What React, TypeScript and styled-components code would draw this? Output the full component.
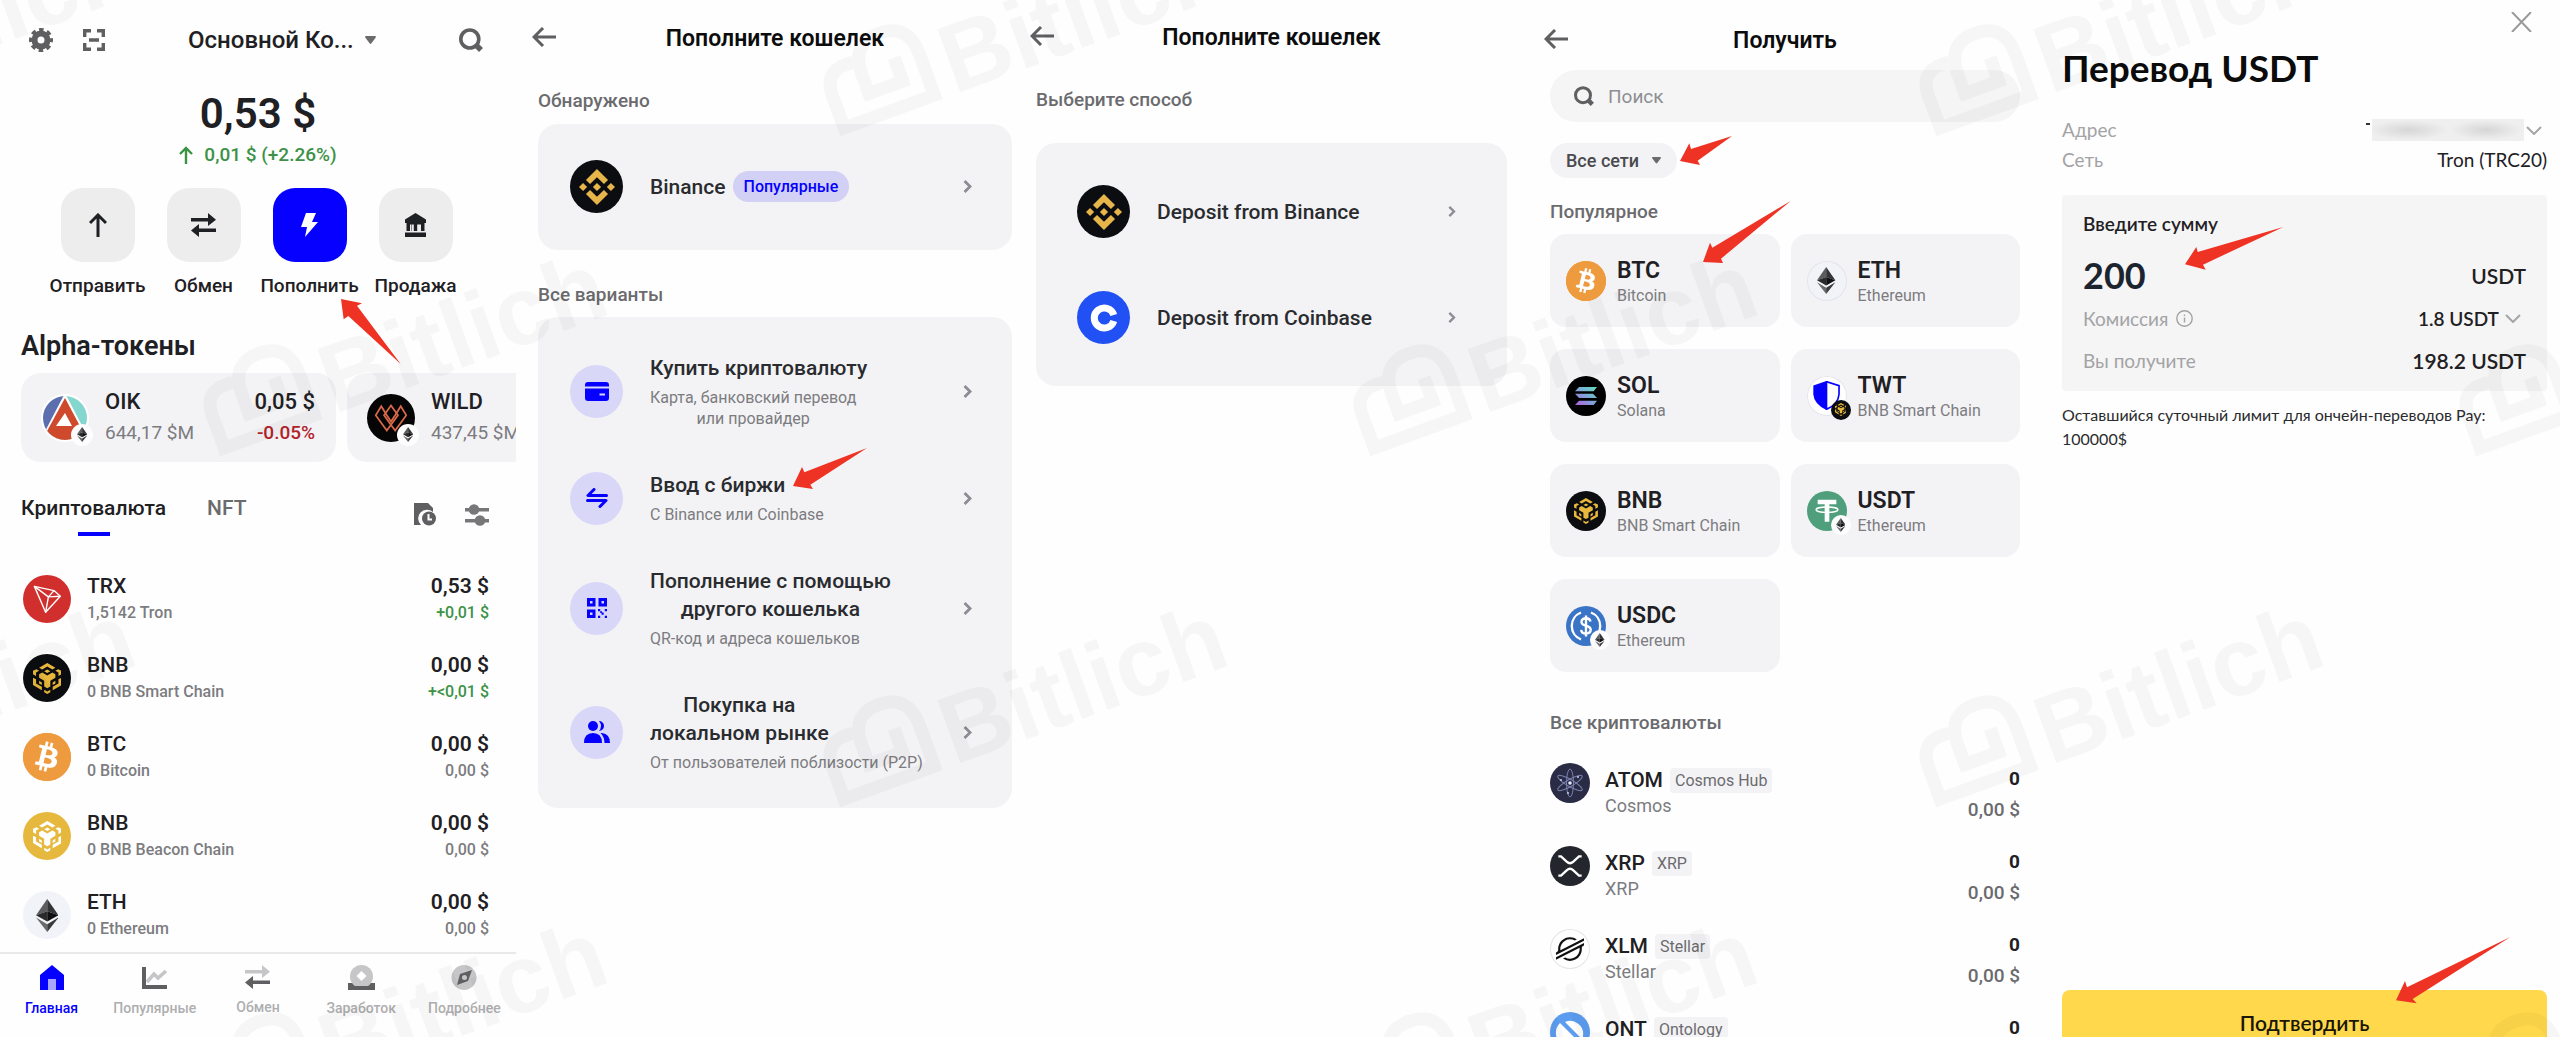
import React from 'react';
import styled, { createGlobalStyle, css } from 'styled-components';
import { SiBinance, SiBitcoin, SiStellar } from 'react-icons/si';

const c = {
  ink: '#1f2023',
  text: '#2a2b2e',
  muted: '#6b6b6e',
  soft: '#7c7c80',
  faint: '#a3a3a5',
  card: '#f3f3f6',
  blue: '#0500ff',
  green: '#3c9246',
  red: '#b3232c',
  arrow: '#ee3224',
};

const sans = `'Roboto', 'Liberation Sans', sans-serif`;
const pay = `'Lato', 'Roboto', sans-serif`;

const GlobalStyle = createGlobalStyle`
  *, *::before, *::after { box-sizing: border-box; }
  body { margin: 0; background: #fefefe; font-family: ${sans}; color: ${c.ink}; }
  h1, h2, h3, p, ul, dl, dd, dt { margin: 0; padding: 0; font-weight: inherit; }
  li { list-style: none; }
  svg { display: block; flex: none; }
  button, input, select {
    font: inherit; color: inherit; background: none; border: 0; margin: 0; padding: 0;
    appearance: none; outline: 0;
  }
  button, select { cursor: pointer; }
`;

const Page = styled.div`
  position: relative;
  display: grid;
  grid-template-columns: 516fr 509fr 501fr 514fr 520fr;
  height: 100vh;
  overflow: hidden;
`;

const Panel = styled.section<{ $pad?: string; $font?: string }>`
  display: flex;
  flex-direction: column;
  min-width: 0;
  min-height: 0;
  overflow: hidden;
  padding: ${p => p.$pad ?? '0'};
  font-family: ${p => p.$font ?? sans};
`;

/* ---------- watermark ---------- */

const Marks = styled.div`
  position: absolute;
  inset: 0;
  overflow: hidden;
  pointer-events: none;
  z-index: 2;
`;

const Mark = styled.div<{ $x: number; $y: number }>`
  position: absolute;
  left: ${p => p.$x}px;
  top: ${p => p.$y}px;
  display: flex;
  align-items: flex-end;
  gap: 12px;
  transform: rotate(-20deg);
  transform-origin: 0 100%;
  opacity: 0.026;
  color: #000;
  font: 700 97px/68px 'Liberation Sans', sans-serif;
`;

const MarkLogo = () => (
  <svg width="110" height="92" viewBox="0 0 110 92" fill="none" stroke="#000" strokeWidth="13">
    <path d="M38 26H30Q7 26 7 50V85H103V42Q103 8 72 8 42 8 42 40V61H78V36" />
  </svg>
);

const markSpots: [number, number][] = [
  [-252, 45], [840, 45], [1936, 45],
  [220, 365], [1370, 365], [2476, 365],
  [-252, 716], [840, 716], [1936, 716],
  [220, 1033], [1370, 1033], [2476, 1033],
];

/* ---------- annotation arrows ---------- */

const ArrowSvg = styled.svg<{ $x: string; $y: string }>`
  position: absolute;
  left: ${p => p.$x};
  top: ${p => p.$y};
  z-index: 3;
  pointer-events: none;
  overflow: visible;
`;

const Arrow = ({ x, y, w, h, points }: { x: string; y: string; w: number; h: number; points: string }) => (
  <ArrowSvg $x={x} $y={y} width={w} height={h} viewBox={`0 0 ${w * 3} ${h * 3}`} aria-hidden>
    <polygon points={points} fill={c.arrow} />
  </ArrowSvg>
);

/* ---------- coin logos ---------- */

const Coin = styled.span<{ $size: number; $bg: string; $ring?: boolean }>`
  position: relative;
  display: grid;
  place-items: center;
  flex: none;
  width: ${p => p.$size}px;
  height: ${p => p.$size}px;
  border-radius: 50%;
  background: ${p => p.$bg};
  ${p => p.$ring && css`box-shadow: inset 0 0 0 1px #e4e5ea;`}
`;

const CoinBadge = styled.span<{ $size: number; $bg: string }>`
  position: absolute;
  right: -4px;
  bottom: -4px;
  display: grid;
  place-items: center;
  width: ${p => p.$size}px;
  height: ${p => p.$size}px;
  border-radius: 50%;
  background: ${p => p.$bg};
`;

const EthGlyph = ({ h }: { h: number }) => (
  <svg width={h * 0.68} height={h} viewBox="0 0 64 94">
    <path d="M32 0 0 46 32 35Z" fill="#5c5c5e" />
    <path d="M32 0 64 46 32 35Z" fill="#343436" />
    <path d="M0 46 32 35V64Z" fill="#2a2a2c" />
    <path d="M64 46 32 35V64Z" fill="#101012" />
    <path d="M0 53 32 72V94Z" fill="#6a6a6c" />
    <path d="M64 53 32 72V94Z" fill="#3a3a3c" />
  </svg>
);

const CubeGlyph = ({ h, color }: { h: number; color: string }) => (
  <svg width={h * 0.92} height={h} viewBox="0 0 84 91" fill={color}>
    <path d="M42 0 66 14 57 19 42 10 27 19 18 14Z" />
    <path d="M42 19 51 24 42 29 33 24Z" />
    <path d="M10 18 18 23 9 28V38L0 33V23Z" />
    <path d="M74 18 66 23 75 28V38L84 33V23Z" />
    <path d="M18 33 27 28 42 37 57 28 66 33V43L51 52V69L42 74 33 69V52L18 43Z" />
    <path d="M0 43 9 48V60L26 70V80L0 65Z" />
    <path d="M84 43 75 48V60L58 70V80L84 65Z" />
    <path d="M18 52 26 57V65L18 60Z" />
    <path d="M66 52 58 57V65L66 60Z" />
    <path d="M33 79 42 84 51 79V86L42 91 33 86Z" />
  </svg>
);

const Btc = ({ size }: { size: number }) => (
  <Coin $size={size} $bg="radial-gradient(circle, #fff 62%, #f09a3e 64%)">
    <SiBitcoin size={size} color="#ee9b40" />
  </Coin>
);

const Bnb = ({ size, bg = '#0b0d10', color = '#e8b73c' }: { size: number; bg?: string; color?: string }) => (
  <Coin $size={size} $bg={bg}>
    <CubeGlyph h={Math.round(size * 0.64)} color={color} />
  </Coin>
);

const Eth = ({ size, ring }: { size: number; ring?: boolean }) => (
  <Coin $size={size} $bg="#f2f3f8" $ring={ring}>
    <EthGlyph h={Math.round(size * 0.68)} />
  </Coin>
);

const EthBadge = ({ size = 20 }: { size?: number }) => (
  <CoinBadge $size={size} $bg="#fdfdfe"><EthGlyph h={Math.round(size * 0.7)} /></CoinBadge>
);

const Trx = ({ size }: { size: number }) => (
  <Coin $size={size} $bg="#d12f2e">
    <svg width="28" height="28" viewBox="0 0 80 80" fill="none" stroke="#fff" strokeWidth="4" strokeLinejoin="round">
      <path d="M4 4 60 16 78 32 36 78Z" />
      <path d="M4 4 44 34 78 32M44 34 36 78M44 34 60 16" />
    </svg>
  </Coin>
);

const Binance = () => (
  <Coin $size={53} $bg="#0b0d10"><SiBinance size={36} color="#e8b54a" /></Coin>
);

const Coinbase = () => (
  <Coin $size={53} $bg="#2151f5">
    <svg width="28" height="28" viewBox="0 0 28 28" fill="none" stroke="#fff" strokeWidth="7">
      <path d="M23.800 11A10 10 0 1 0 23.800 17" />
    </svg>
  </Coin>
);

const Oik = () => (
  <Coin $size={48} $bg="#fff">
    <svg width="46" height="46" viewBox="0 0 46 46">
      <clipPath id="oik"><circle cx="23" cy="23" r="22" /></clipPath>
      <g clipPath="url(#oik)">
        <rect width="23" height="46" fill="#5b6fae" />
        <rect x="23" width="23" height="46" fill="#85d6cf" />
        <path d="M23 -2 48 46H-2Z" fill="#fff" />
        <path d="M23 3 46 46H0L4 38Z" fill="#cf4a2c" />
        <path d="M23 18 30 31H14Z" fill="#fff" />
      </g>
    </svg>
    <EthBadge size={22} />
  </Coin>
);

const Wild = () => (
  <Coin $size={48} $bg="#050505">
    <svg width="32" height="28" viewBox="0 0 92 80" fill="none" stroke="#d9684a" strokeWidth="5">
      <path d="M18 6 2 32 34 76 66 32 46 4 26 32 46 60 58 76 90 32 74 6 58 32 46 50 34 32Z" />
    </svg>
    <EthBadge size={22} />
  </Coin>
);

const Sol = () => (
  <Coin $size={40} $bg="#000">
    <svg width="22" height="18" viewBox="0 0 66 54">
      <defs>
        <linearGradient id="sol" x1="1" y1="0" x2="0" y2="1">
          <stop offset="0" stopColor="#5fe0b8" /><stop offset=".5" stopColor="#7fa6d8" /><stop offset="1" stopColor="#b45be0" />
        </linearGradient>
      </defs>
      <path fill="url(#sol)" d="M12 0H66L56 13H0ZM0 20H54L66 33H12ZM12 41H66L56 54H0Z" />
    </svg>
  </Coin>
);

const Twt = () => (
  <Coin $size={40} $bg="#fff" $ring>
    <svg width="27" height="29" viewBox="0 0 80 88">
      <path d="M40 2 78 14V40Q76 70 40 86Z" fill="#fff" stroke={c.blue} strokeWidth="5" />
      <path d="M40 0V88Q2 70 0 40V14Z" fill={c.blue} />
    </svg>
    <CoinBadge $size={20} $bg="#0b0d10"><CubeGlyph h={13} color="#e8b73c" /></CoinBadge>
  </Coin>
);

const Usdt = () => (
  <Coin $size={40} $bg="#4f9f7d">
    <svg width="24" height="24" viewBox="0 0 72 72" fill="#fff">
      <path d="M8 2H64V16H43V68H29V16H8Z" />
      <ellipse cx="36" cy="32" rx="33" ry="8" fill="none" stroke="#fff" strokeWidth="4" />
    </svg>
    <EthBadge />
  </Coin>
);

const Usdc = () => (
  <Coin $size={40} $bg="#3a74c7">
    <svg width="40" height="40" viewBox="0 0 40 40" fill="none" stroke="#fff" strokeWidth="2.400">
      <path d="M15 6.500A14.500 14.500 0 0 0 15 33.500M25 6.500A14.500 14.500 0 0 1 25 33.500" />
      <path d="M24.500 15.500C24 12.800 22 12.200 20 12.200 17.300 12.200 15.500 13.600 15.500 16 15.500 21 24.700 18.500 24.700 23.600 24.700 26.200 22.600 27.600 20 27.600 17.300 27.600 15.400 26.400 15.200 23.800M20 9.500V30.500" />
    </svg>
    <EthBadge />
  </Coin>
);

const Atom = () => (
  <Coin $size={40} $bg="#2a2b45">
    <svg width="30" height="30" viewBox="0 0 30 30" fill="none" stroke="#7b80ad" strokeWidth="1">
      <ellipse cx="15" cy="15" rx="3.500" ry="14" />
      <ellipse cx="15" cy="15" rx="3.500" ry="14" transform="rotate(60 15 15)" />
      <ellipse cx="15" cy="15" rx="3.500" ry="14" transform="rotate(-60 15 15)" />
      <circle cx="15" cy="15" r="1.800" fill="#e6e8ff" stroke="none" />
      <circle cx="6" cy="12" r="1" fill="#cdd0ee" stroke="none" />
      <circle cx="13" cy="25" r="1" fill="#cdd0ee" stroke="none" />
      <circle cx="23" cy="9" r="1" fill="#cdd0ee" stroke="none" />
    </svg>
  </Coin>
);

const Xrp = () => (
  <Coin $size={40} $bg="#24262d">
    <svg width="24" height="22" viewBox="0 0 72 66" fill="none" stroke="#fff" strokeWidth="7">
      <path d="M1 4H9L26 20Q36 29 46 20L63 4H71" />
      <path d="M1 62H9L26 46Q36 37 46 46L63 62H71" />
    </svg>
  </Coin>
);

const Ont = () => (
  <Coin $size={40} $bg="#5c9df0">
    <svg width="40" height="40" viewBox="0 0 40 40">
      <path d="M10 11 30 31A14 14 0 0 1 10 11Z" fill="#fff" />
      <path d="M15 10A13 13 0 0 1 33 24V28Z" fill="#fff" />
    </svg>
  </Coin>
);

/* ---------- small icons ---------- */

const Caret = ({ w = 11 }: { w?: number }) => (
  <svg width={w} height={w * 0.75} viewBox="0 0 12 9" fill={c.muted}><path d="M1 0H11Q12.500 0 11.500 2L7 8Q6 9.200 5 8L.5 2Q-.5 0 1 0Z" /></svg>
);

const BackIcon = () => (
  <svg width="24" height="20" viewBox="0 0 24 20" fill="none" stroke="#5f5f62" strokeWidth="3"><path d="M11 1 2 10 11 19M2 10H24" /></svg>
);

const ChevronRight = ({ h = 13 }: { h?: number }) => (
  <svg width={h * 0.7} height={h} viewBox="0 0 9 13" fill="none" stroke="#8b8c94" strokeWidth="2.800"><path d="M1.500 1 7 6.500 1.500 12" /></svg>
);

const ChevronDown = () => (
  <svg width="16" height="9" viewBox="0 0 16 9" fill="none" stroke="#a6a6a8" strokeWidth="2"><path d="M1 1 8 8 15 1" /></svg>
);

const SearchIcon = ({ size }: { size: number }) => (
  <svg width={size} height={size} viewBox="0 0 24 24" fill="none" stroke="#5f5f62"><circle cx="10.800" cy="11" r="9" strokeWidth="3.600" /><path d="M17 17 22 22" strokeWidth="5.500" /></svg>
);

const GearIcon = () => (
  <svg width="24" height="24" viewBox="0 0 24 24" fill="none">
    <circle cx="12" cy="12" r="6.500" stroke="#5f5f62" strokeWidth="6" />
    <circle cx="12" cy="12" r="10.300" stroke="#5f5f62" strokeWidth="3.400" strokeDasharray="4.500 3.590" strokeDashoffset="2.250" />
  </svg>
);

const ScanIcon = () => (
  <svg width="22" height="22" viewBox="0 0 22 22" fill="none" stroke="#5f5f62" strokeWidth="3.400"><path d="M1.700 8V1.700H8M14 1.700H20.300V8M20.300 14V20.300H14M8 20.300H1.700V14M6 11H16" /></svg>
);

const SwapIcon = ({ top = c.ink, bottom = c.ink }: { top?: string; bottom?: string }) => (
  <svg width="27" height="24" viewBox="0 0 27 24">
    <path d="M1 5H18V0L26 6.800 18 13V8.500H1Z" fill={top} />
    <path d="M26 15.500H9V11L1 17.500 9 24V19H26Z" fill={bottom} />
  </svg>
);

/* ---------- shared header pieces ---------- */

const TitleBar = styled.header<{ $h: number; $shift: string }>`
  display: grid;
  grid-template-columns: 24px 1fr 24px;
  align-items: center;
  flex: none;
  height: ${p => p.$h}px;
  margin: ${p => p.$shift};
`;

const ScreenTitle = styled.h2`
  padding-top: 3px;
  font-size: 23px;
  line-height: 28px;
  font-weight: 600;
  text-align: center;
  color: #0c0c0d;
`;

const SectionLabel = styled.h3<{ $m?: string }>`
  flex: none;
  font-size: 19px;
  line-height: 24px;
  font-weight: 500;
  color: ${c.muted};
  margin: ${p => p.$m ?? '0'};
`;

const Header = ({ title, h, shift }: { title: string; h: number; shift: string }) => (
  <TitleBar $h={h} $shift={shift}>
    <button aria-label="Назад"><BackIcon /></button>
    <ScreenTitle>{title}</ScreenTitle>
  </TitleBar>
);

/* ---------- panel 1: wallet ---------- */

const WalletBar = styled.header`
  display: flex;
  align-items: center;
  justify-content: space-between;
  height: 80px;
  padding: 0 33px 0 29px;
  flex: none;
`;

const BarGroup = styled.div<{ $gap: number }>`
  display: flex;
  align-items: center;
  gap: ${p => p.$gap}px;
`;

const WalletSelect = styled.select`
  font-size: 24px;
  line-height: 30px;
  font-weight: 500;
`;

const Balance = styled.p`
  text-align: center;
  font-size: 42px;
  line-height: 52px;
  font-weight: 600;
  margin-top: 8px;
`;

const Change = styled.p`
  display: flex;
  justify-content: center;
  align-items: center;
  gap: 11px;
  margin-top: 3px;
  font-size: 19px;
  line-height: 24px;
  font-weight: 500;
  color: ${c.green};
`;

const Actions = styled.nav`
  display: grid;
  grid-template-columns: repeat(4, 106px);
  justify-content: center;
  margin-top: 21px;
  padding-right: 3px;
`;

const ActionButton = styled.button`
  position: relative;
  display: flex;
  flex-direction: column;
  align-items: center;
  gap: 12px;
  font-size: 19px;
  line-height: 24px;
  font-weight: 500;
`;

const ActionTile = styled.span<{ $active?: boolean }>`
  display: grid;
  place-items: center;
  width: 74px;
  height: 74px;
  border-radius: 22px;
  background: ${p => (p.$active ? c.blue : '#ededee')};
`;

const AlphaTitle = styled.h2`
  margin: 32px 21px 11px;
  font-size: 27px;
  line-height: 32px;
  font-weight: 600;
`;

const AlphaStrip = styled.div`
  display: flex;
  gap: 11px;
  padding-left: 21px;
  overflow: hidden;
`;

const AlphaCard = styled.article`
  display: flex;
  align-items: center;
  flex: none;
  gap: 16px;
  width: 315px;
  height: 89px;
  padding: 0 21px 0 20px;
  border-radius: 20px;
  background: ${c.card};
`;

const AlphaText = styled.div<{ $end?: boolean; $tone?: string }>`
  display: flex;
  flex-direction: column;
  gap: 5px;
  font-size: 22px;
  line-height: 26px;
  font-weight: 500;
  white-space: nowrap;
  ${p => p.$end && css`margin-left: auto; text-align: right;`}
  small { font-size: 19px; font-weight: ${p => (p.$end ? 500 : 400)}; color: ${p => p.$tone ?? c.soft}; }
`;

const Tabs = styled.div`
  display: flex;
  align-items: flex-start;
  gap: 41px;
  margin-top: 33px;
  padding: 0 27px 0 21px;
`;

const Tab = styled.button<{ $active?: boolean }>`
  display: flex;
  flex-direction: column;
  align-items: center;
  gap: 11px;
  font-size: 21px;
  line-height: 26px;
  font-weight: 500;
  color: ${p => (p.$active ? c.ink : c.muted)};
  &::after {
    content: '';
    width: 32px;
    height: 4px;
    background: ${p => (p.$active ? c.blue : 'transparent')};
  }
`;

const TabTools = styled.div`
  display: flex;
  gap: 29px;
  margin: 8px 0 0 auto;
`;

const HoldingList = styled.ul`
  display: flex;
  flex-direction: column;
  gap: 31px;
  margin-top: 39px;
  padding: 0 27px 0 23px;
`;

const Holding = styled.li`
  display: flex;
  align-items: center;
  gap: 16px;
  height: 48px;
`;

const HoldingText = styled.div<{ $end?: boolean; $up?: boolean }>`
  display: flex;
  flex-direction: column;
  font-size: 21px;
  line-height: 28px;
  font-weight: 500;
  ${p => p.$end && css`margin-left: auto; text-align: right; font-weight: 600;`}
  small {
    font-size: 16px;
    line-height: 26px;
    font-weight: 500;
    color: ${p => (p.$up ? c.green : c.soft)};
  }
`;

const TabBar = styled.nav`
  display: grid;
  grid-template-columns: repeat(5, 1fr);
  flex: none;
  height: 85px;
  margin-top: auto;
  padding-top: 11px;
  border-top: 2px solid #e9e9ea;
  background: #fefefe;
`;

const TabBarItem = styled.button<{ $active?: boolean }>`
  display: flex;
  flex-direction: column;
  align-items: center;
  gap: 8px;
  height: 53px;
  font-size: 14px;
  line-height: 20px;
  font-weight: 500;
  color: ${p => (p.$active ? c.blue : '#aeaeb0')};
`;

const holdings = [
  { icon: <Trx size={48} />, name: 'TRX', sub: '1,5142 Tron', usd: '0,53 $', delta: '+0,01 $', up: true },
  { icon: <Bnb size={48} />, name: 'BNB', sub: '0 BNB Smart Chain', usd: '0,00 $', delta: '+<0,01 $', up: true },
  { icon: <Btc size={48} />, name: 'BTC', sub: '0 Bitcoin', usd: '0,00 $', delta: '0,00 $' },
  { icon: <Bnb size={48} bg="#e6b93e" color="#fff" />, name: 'BNB', sub: '0 BNB Beacon Chain', usd: '0,00 $', delta: '0,00 $' },
  { icon: <Eth size={48} />, name: 'ETH', sub: '0 Ethereum', usd: '0,00 $', delta: '0,00 $' },
];

const WalletPanel = () => (
  <Panel>
    <WalletBar>
      <BarGroup $gap={30}>
        <button aria-label="Настройки"><GearIcon /></button>
        <button aria-label="Сканировать"><ScanIcon /></button>
      </BarGroup>
      <BarGroup $gap={11}>
        <WalletSelect aria-label="Кошелек"><option>Основной Ко...</option></WalletSelect>
        <Caret />
      </BarGroup>
      <button aria-label="Поиск"><SearchIcon size={24} /></button>
    </WalletBar>
    <Balance>0,53 $</Balance>
    <Change>
      <svg width="14" height="18" viewBox="0 0 14 18" fill="none" stroke={c.green} strokeWidth="2.400"><path d="M1 8 7 2 13 8M7 2V18" /></svg>
      0,01 $ (+2.26%)
    </Change>
    <Actions>
      <ActionButton>
        <ActionTile><svg width="18" height="24" viewBox="0 0 18 24" fill="none" stroke={c.ink} strokeWidth="3"><path d="M1 10 9 2 17 10M9 2V24" /></svg></ActionTile>
        Отправить
      </ActionButton>
      <ActionButton>
        <ActionTile><SwapIcon /></ActionTile>
        Обмен
      </ActionButton>
      <ActionButton>
        <ActionTile $active><svg width="17" height="24" viewBox="0 0 17 24" fill="#fff"><path d="M5 0H15L11 9H17L4 24 6 14H0Z" /></svg></ActionTile>
        Пополнить
        <Arrow x="84px" y="111px" w={60} h={65} points="0,0 63,13 48,20 179,195 22,51 8,61" />
      </ActionButton>
      <ActionButton>
        <ActionTile><svg width="23" height="24" viewBox="0 0 23 24" fill={c.ink}><path d="M11.500 0 22 6.500V10H1V6.500ZM2.500 11.500H6V18H2.500ZM7.500 10H8V18H7.500ZM9.800 11.500H13.200V18H9.800ZM17 11.500H20.500V18H17ZM1 19.500H22V24H1ZM2.500 10H20.500V11.500H2.500Z" /></svg></ActionTile>
        Продажа
      </ActionButton>
    </Actions>
    <AlphaTitle>Alpha-токены</AlphaTitle>
    <AlphaStrip>
      <AlphaCard>
        <Oik />
        <AlphaText>OIK<small>644,17 $M</small></AlphaText>
        <AlphaText $end $tone={c.red}>0,05 $<small>-0.05%</small></AlphaText>
      </AlphaCard>
      <AlphaCard>
        <Wild />
        <AlphaText>WILD<small>437,45 $M</small></AlphaText>
      </AlphaCard>
    </AlphaStrip>
    <Tabs>
      <Tab $active>Криптовалюта</Tab>
      <Tab>NFT</Tab>
      <TabTools>
        <button aria-label="История">
          <svg width="22" height="23" viewBox="0 0 22 23">
            <path d="M0 0H14L19 5V9A8 8 0 0 0 7 22H0Z" fill="#5f5f62" />
            <circle cx="15" cy="15.500" r="7" fill="#5f5f62" />
            <path d="M14.500 11V16.500H18" fill="none" stroke="#fff" strokeWidth="2" />
          </svg>
        </button>
        <button aria-label="Фильтр">
          <svg width="24" height="22" viewBox="0 0 24 22" fill="#77777a"><rect y="4" width="24" height="3.500" /><circle cx="9" cy="5.500" r="5.300" /><rect y="15" width="24" height="3.500" /><circle cx="15" cy="16.500" r="5.300" /></svg>
        </button>
      </TabTools>
    </Tabs>
    <HoldingList>
      {holdings.map((r, i) => (
        <Holding key={i}>
          {r.icon}
          <HoldingText>{r.name}<small>{r.sub}</small></HoldingText>
          <HoldingText $end $up={r.up}>{r.usd}<small>{r.delta}</small></HoldingText>
        </Holding>
      ))}
    </HoldingList>
    <TabBar>
      <TabBarItem $active>
        <svg width="26" height="25" viewBox="0 0 26 25"><path d="M13 0 25 10V25H1V10Z" fill={c.blue} /><rect x="9" y="14" width="8" height="11" fill="#a6a4ff" /></svg>
        Главная
      </TabBarItem>
      <TabBarItem>
        <svg width="26" height="25" viewBox="0 0 26 25" fill="none"><path d="M2 2V22H25" stroke="#5f5f62" strokeWidth="4" /><path d="M5 17 12 9 16 13 24 6" stroke="#c6c6c8" strokeWidth="3.500" /></svg>
        Популярные
      </TabBarItem>
      <TabBarItem>
        <SwapIcon top="#c6c6c8" bottom="#5f5f62" />
        Обмен
      </TabBarItem>
      <TabBarItem>
        <svg width="27" height="25" viewBox="0 0 27 25"><path d="M0 18H27V25H0Z" fill="#5f5f62" /><circle cx="13.500" cy="11.500" r="11.500" fill="#c6c6c8" /><path d="M0 21H27V25H0Z" fill="#5f5f62" /><path d="M13.500 6 18.500 11 13.500 16 8.500 11Z" fill="#fff" /></svg>
        Заработок
      </TabBarItem>
      <TabBarItem>
        <svg width="26" height="25" viewBox="0 0 26 25"><circle cx="13" cy="12.500" r="12.500" fill="#c6c6c8" /><path d="M21 5 17 16 6 20 9 9Z" fill="#5f5f62" /><circle cx="13.500" cy="12.500" r="2.500" fill="#c6c6c8" /></svg>
        Подробнее
      </TabBarItem>
    </TabBar>
  </Panel>
);

/* ---------- panels 2 and 3: top-up options ---------- */

const OptionCard = styled.ul<{ $pad: string; $gap: number }>`
  display: flex;
  flex-direction: column;
  flex: none;
  gap: ${p => p.$gap}px;
  padding: ${p => p.$pad};
  border-radius: 20px;
  background: ${c.card};
`;

const OptionButton = styled.button`
  display: flex;
  align-items: center;
  gap: 27px;
  width: 100%;
  min-height: 53px;
  > svg { margin-left: auto; }
`;

const OptionText = styled.span`
  display: flex;
  flex-direction: column;
  align-items: flex-start;
  gap: 5px;
  text-align: center;
`;

const OptionTitle = styled.span`
  position: relative;
  font-size: 21px;
  line-height: 28px;
  font-weight: 500;
  color: ${c.text};
`;

const OptionSub = styled.span`
  font-size: 16px;
  line-height: 21px;
  white-space: nowrap;
  color: ${c.soft};
`;

const Inline = styled.span`
  display: flex;
  align-items: center;
  gap: 7px;
`;

const Popular = styled.span`
  padding: 0 11px;
  border-radius: 16px;
  background: #d2d0f5;
  color: ${c.blue};
  font-size: 16px;
  line-height: 31px;
  font-weight: 500;
`;

const IconCoin = styled(Coin)`
  background: #d9d7f7;
`;

const options: { icon: React.ReactNode; title: React.ReactNode; sub: React.ReactNode }[] = [
  {
    icon: <svg width="24" height="19" viewBox="0 0 24 19"><path d="M3 0H21Q24 0 24 3V4.500H0V3Q0 0 3 0ZM0 6.500H24V16Q24 19 21 19H3Q0 19 0 16ZM14.500 11.500V13.500H20V11.500Z" fill={c.blue} fillRule="evenodd" /></svg>,
    title: 'Купить криптовалюту',
    sub: <>Карта, банковский перевод<br />или провайдер</>,
  },
  {
    icon: <svg width="22" height="20" viewBox="0 0 22 20" fill="none" stroke={c.blue} strokeWidth="3" strokeLinecap="round" strokeLinejoin="round"><path d="M8 1.500 2 7.500H20.500M14 18.500 20 12.500H1.500" /></svg>,
    title: <>Ввод с биржи<Arrow x="calc(100% + 8px)" y="-23px" w={74} h={41} points="0,114 60,123 52,110 222,0 34,73 27,57" /></>,
    sub: 'С Binance или Coinbase',
  },
  {
    icon: (
      <svg width="20" height="20" viewBox="0 0 20 20">
        <path d="M1.500 1.500H7V7H1.500ZM13 1.500H18.500V7H13ZM1.500 13H7V18.500H1.500Z" fill="none" stroke={c.blue} strokeWidth="3" />
        <path d="M11 11H13.200V13.200H11ZM14.500 14.500H16.700V16.700H14.500ZM17.800 11H20V13.200H17.800ZM11 17.800H13.200V20H11ZM17.800 17.800H20V20H17.800ZM13.200 13.200H15V15H13.200Z" fill={c.blue} />
      </svg>
    ),
    title: <>Пополнение с помощью<br />другого кошелька</>,
    sub: 'QR-код и адреса кошельков',
  },
  {
    icon: (
      <svg width="26" height="23" viewBox="0 0 26 23" fill={c.blue}>
        <circle cx="9" cy="5" r="5" /><path d="M0 22Q0 12 9 12 18 12 18 22Z" /><path d="M15 0A5 5 0 0 1 15 10 8 8 0 0 0 15 0ZM18 12Q26 13 26 22H20.500Q20.500 16 16.500 12Z" />
      </svg>
    ),
    title: <>Покупка на<br />локальном рынке</>,
    sub: 'От пользователей поблизости (P2P)',
  },
];

const TopUpPanel = () => (
  <Panel $pad="0 13px 0 22px">
    <Header title="Пополните кошелек" h={74} shift="0 -6px" />
    <SectionLabel $m="15px 0 11px">Обнаружено</SectionLabel>
    <OptionCard $pad="36px 40px 37px 32px" $gap={0}>
      <li>
        <OptionButton>
          <Binance />
          <Inline><OptionTitle>Binance</OptionTitle><Popular>Популярные</Popular></Inline>
          <ChevronRight />
        </OptionButton>
      </li>
    </OptionCard>
    <SectionLabel $m="33px 0 10px">Все варианты</SectionLabel>
    <OptionCard $pad="37px 40px 35px 32px" $gap={42}>
      {options.map((o, i) => (
        <li key={i}>
          <OptionButton>
            <IconCoin $size={53} $bg="#d9d7f7">{o.icon}</IconCoin>
            <OptionText><OptionTitle>{o.title}</OptionTitle><OptionSub>{o.sub}</OptionSub></OptionText>
            <ChevronRight />
          </OptionButton>
        </li>
      ))}
    </OptionCard>
  </Panel>
);

const MethodPanel = () => (
  <Panel $pad="0 19px 0 11px">
    <Header title="Пополните кошелек" h={72} shift="0 -6px" />
    <SectionLabel $m="16px 0 31px">Выберите способ</SectionLabel>
    <OptionCard $pad="42px 51px 42px 41px" $gap={53}>
      <li><OptionButton><Binance /><OptionTitle>Deposit from Binance</OptionTitle><ChevronRight h={11} /></OptionButton></li>
      <li><OptionButton><Coinbase /><OptionTitle>Deposit from Coinbase</OptionTitle><ChevronRight h={11} /></OptionButton></li>
    </OptionCard>
  </Panel>
);

/* ---------- panel 4: receive ---------- */

const SearchBox = styled.label`
  display: flex;
  align-items: center;
  flex: none;
  gap: 14px;
  height: 52px;
  padding: 0 24px;
  border-radius: 26px;
  background: #f5f5f6;
  font-size: 19px;
  input { flex: 1; min-width: 0; }
  input::placeholder { color: #8e8e92; opacity: 1; }
`;

const NetworkPill = styled.label`
  position: relative;
  display: flex;
  align-items: center;
  align-self: flex-start;
  flex: none;
  gap: 12px;
  height: 35px;
  margin: 21px 0 22px;
  padding: 0 16px;
  border-radius: 18px;
  background: ${c.card};
  font-size: 18px;
  line-height: 24px;
  font-weight: 500;
  color: #4a4a4d;
`;

const PopularGrid = styled.div`
  display: grid;
  grid-template-columns: 1fr 1fr;
  flex: none;
  gap: 22px 11px;
`;

const CoinCard = styled.button`
  position: relative;
  display: flex;
  align-items: center;
  gap: 11px;
  height: 93px;
  padding: 0 16px;
  border-radius: 16px;
  background: ${c.card};
  text-align: left;
`;

const CoinCardText = styled.span`
  display: flex;
  flex-direction: column;
  padding-top: 2px;
  font-size: 23px;
  line-height: 28px;
  font-weight: 600;
  small { font-size: 16px; line-height: 22px; font-weight: 400; color: ${c.soft}; }
`;

const AssetList = styled.ul`
  display: flex;
  flex-direction: column;
  gap: 31px;
  margin-top: 28px;
`;

const Asset = styled.li`
  display: flex;
  gap: 15px;
  height: 52px;
`;

const AssetText = styled.div`
  display: flex;
  flex-direction: column;
  margin-top: 4px;
  font-size: 18px;
  line-height: 26px;
  color: ${c.soft};
`;

const AssetName = styled.div`
  display: flex;
  align-items: center;
  gap: 7px;
  font-size: 21px;
  font-weight: 500;
  color: ${c.ink};
  span {
    padding: 0 5px;
    border-radius: 4px;
    background: ${c.card};
    font-size: 16px;
    line-height: 25px;
    font-weight: 400;
    color: ${c.muted};
  }
`;

const AssetValue = styled.div`
  display: flex;
  flex-direction: column;
  margin-left: auto;
  text-align: right;
  font-size: 19px;
  line-height: 31px;
  font-weight: 700;
  small { font-size: 19px; font-weight: 500; color: ${c.muted}; }
`;

const popular = [
  { icon: <Btc size={40} />, name: 'BTC', net: 'Bitcoin', mark: true },
  { icon: <Eth size={40} ring />, name: 'ETH', net: 'Ethereum' },
  { icon: <Sol />, name: 'SOL', net: 'Solana' },
  { icon: <Twt />, name: 'TWT', net: 'BNB Smart Chain' },
  { icon: <Bnb size={40} />, name: 'BNB', net: 'BNB Smart Chain' },
  { icon: <Usdt />, name: 'USDT', net: 'Ethereum' },
  { icon: <Usdc />, name: 'USDC', net: 'Ethereum' },
];

const assets = [
  { icon: <Atom />, name: 'ATOM', net: 'Cosmos Hub', full: 'Cosmos' },
  { icon: <Xrp />, name: 'XRP', net: 'XRP', full: 'XRP' },
  { icon: <Coin $size={40} $bg="#fff" $ring><SiStellar size={28} color="#111" /></Coin>, name: 'XLM', net: 'Stellar', full: 'Stellar' },
  { icon: <Ont />, name: 'ONT', net: 'Ontology', full: 'Ontology' },
];

const ReceivePanel = () => (
  <Panel $pad="0 20px 0 24px">
    <Header title="Получить" h={62} shift="8px -6px 0" />
    <SearchBox>
      <SearchIcon size={20} />
      <input type="search" placeholder="Поиск" aria-label="Поиск" />
    </SearchBox>
    <NetworkPill>
      <select aria-label="Сеть"><option>Все сети</option></select>
      <Caret w={9} />
      <Arrow x="calc(100% + 3px)" y="-7px" w={52} h={29} points="0,75 60,87 53,74 156,0 33,39 28,22" />
    </NetworkPill>
    <SectionLabel $m="0 0 10px">Популярное</SectionLabel>
    <PopularGrid>
      {popular.map(p => (
        <CoinCard key={p.name}>
          {p.icon}
          <CoinCardText>{p.name}<small>{p.net}</small></CoinCardText>
          {p.mark && <Arrow x="153px" y="-33px" w={88} h={62} points="0,183 60,186 54,173 263,0 28,140 21,125" />}
        </CoinCard>
      ))}
    </PopularGrid>
    <SectionLabel $m="39px 0 0">Все криптовалюты</SectionLabel>
    <AssetList>
      {assets.map(a => (
        <Asset key={a.name}>
          {a.icon}
          <AssetText><AssetName>{a.name}<span>{a.net}</span></AssetName>{a.full}</AssetText>
          <AssetValue>0<small>0,00 $</small></AssetValue>
        </Asset>
      ))}
    </AssetList>
  </Panel>
);

/* ---------- panel 5: transfer ---------- */

const CloseButton = styled.button`
  align-self: flex-end;
  margin: 12px 15px 0 0;
`;

const TransferTitle = styled.h1`
  margin-top: 12px;
  font-size: 37px;
  line-height: 48px;
  font-weight: 700;
  color: #0b0b0c;
`;

const Details = styled.dl`
  display: grid;
  grid-template-columns: auto 1fr;
  margin-top: 23px;
  font-size: 19px;
  line-height: 30px;
  dt { color: ${c.faint}; }
  dd { display: flex; justify-content: flex-end; align-items: center; }
`;

const AddressButton = styled.button`
  display: flex;
  align-items: center;
  gap: 2px;
  margin-right: 5px;
`;

const AddressStart = styled.span`
  width: 4px;
  height: 2px;
  margin-bottom: 12px;
  background: #333;
`;

const Redacted = styled.span`
  width: 152px;
  height: 22px;
  background:
    radial-gradient(ellipse 40px 10px at 24% 50%, #d6d6d7, transparent),
    radial-gradient(ellipse 36px 10px at 75% 50%, #d6d6d7, transparent),
    #efeff0;
`;

const AmountCard = styled.div`
  display: flex;
  flex-direction: column;
  flex: none;
  height: 196px;
  margin-top: 20px;
  padding: 16px 21px 0;
  border-radius: 4px;
  background: #f5f5f5;
`;

const AmountLabel = styled.label`
  font-size: 19px;
  line-height: 26px;
  font-weight: 600;
`;

const AmountRow = styled.div`
  position: relative;
  display: flex;
  align-items: center;
  justify-content: space-between;
  height: 60px;
  margin-top: 8px;
  font-size: 21px;
  font-weight: 600;
  input {
    width: 240px;
    height: 44px;
    font-size: 36px;
    font-weight: 700;
    color: #1c2430;
  }
`;

const FeeRow = styled.div<{ $big?: boolean }>`
  display: flex;
  align-items: center;
  justify-content: space-between;
  flex: none;
  height: 42px;
  margin-top: ${p => (p.$big ? 0 : -8)}px;
  font-size: ${p => (p.$big ? 21 : 19)}px;
  font-weight: 600;
`;

const FeeLabel = styled.span`
  display: flex;
  align-items: center;
  gap: 8px;
  font-size: 19px;
  font-weight: 400;
  color: ${c.faint};
`;

const FeeSelect = styled.span`
  display: flex;
  align-items: center;
  gap: 6px;
  padding-right: 5px;
`;

const LimitNote = styled.p`
  margin-top: 12px;
  font-size: 16px;
  line-height: 24px;
  color: ${c.text};
`;

const ConfirmDock = styled.footer`
  position: relative;
  flex: none;
  height: 47px;
  margin-top: auto;
`;

const ConfirmButton = styled.button`
  width: 100%;
  height: 64px;
  border-radius: 8px;
  background: #ffd84b;
  font-size: 21px;
  font-weight: 600;
  color: #1a1608;
`;

const TransferPanel = () => (
  <Panel $pad="0 13px 0 22px" $font={pay}>
    <CloseButton aria-label="Закрыть">
      <svg width="21" height="20" viewBox="0 0 21 20" stroke="#9a9a9c" strokeWidth="2"><path d="M1 0 20 20M20 0 1 20" /></svg>
    </CloseButton>
    <TransferTitle>Перевод USDT</TransferTitle>
    <Details>
      <dt>Адрес</dt>
      <dd><AddressButton aria-label="Адрес"><AddressStart /><Redacted /><ChevronDown /></AddressButton></dd>
      <dt>Сеть</dt>
      <dd>Tron (TRC20)</dd>
    </Details>
    <AmountCard>
      <AmountLabel htmlFor="amount">Введите сумму</AmountLabel>
      <AmountRow>
        <input id="amount" defaultValue="200" inputMode="decimal" />
        USDT
        <Arrow x="102px" y="-18px" w={98} h={43} points="0,112 62,128 54,113 295,0 38,75 34,60" />
      </AmountRow>
      <FeeRow>
        <FeeLabel>
          Комиссия
          <svg width="17" height="17" viewBox="0 0 17 17" fill="none" stroke="#a3a3a5" strokeWidth="1.400"><circle cx="8.500" cy="8.500" r="7.700" /><path d="M8.500 7.500V12.500M8.500 4.500V6" /></svg>
        </FeeLabel>
        <FeeSelect><select aria-label="Комиссия"><option>1.8 USDT</option></select><ChevronDown /></FeeSelect>
      </FeeRow>
      <FeeRow $big>
        <FeeLabel>Вы получите</FeeLabel>
        198.2 USDT
      </FeeRow>
    </AmountCard>
    <LimitNote>Оставшийся суточный лимит для ончейн-переводов Pay:<br />100000$</LimitNote>
    <ConfirmDock>
      <ConfirmButton>Подтвердить</ConfirmButton>
      <Arrow x="calc(69% - 1px)" y="-53px" w={115} h={67} points="0,190 62,199 50,186 343,0 33,151 27,132" />
    </ConfirmDock>
  </Panel>
);

export default function App() {
  return (
    <>
      <GlobalStyle />
      <Page>
        <WalletPanel />
        <TopUpPanel />
        <MethodPanel />
        <ReceivePanel />
        <TransferPanel />
        <Marks aria-hidden>
          {markSpots.map(([x, y]) => (
            <Mark key={`${x}-${y}`} $x={x} $y={y}><MarkLogo />Bitlich</Mark>
          ))}
        </Marks>
      </Page>
    </>
  );
}
